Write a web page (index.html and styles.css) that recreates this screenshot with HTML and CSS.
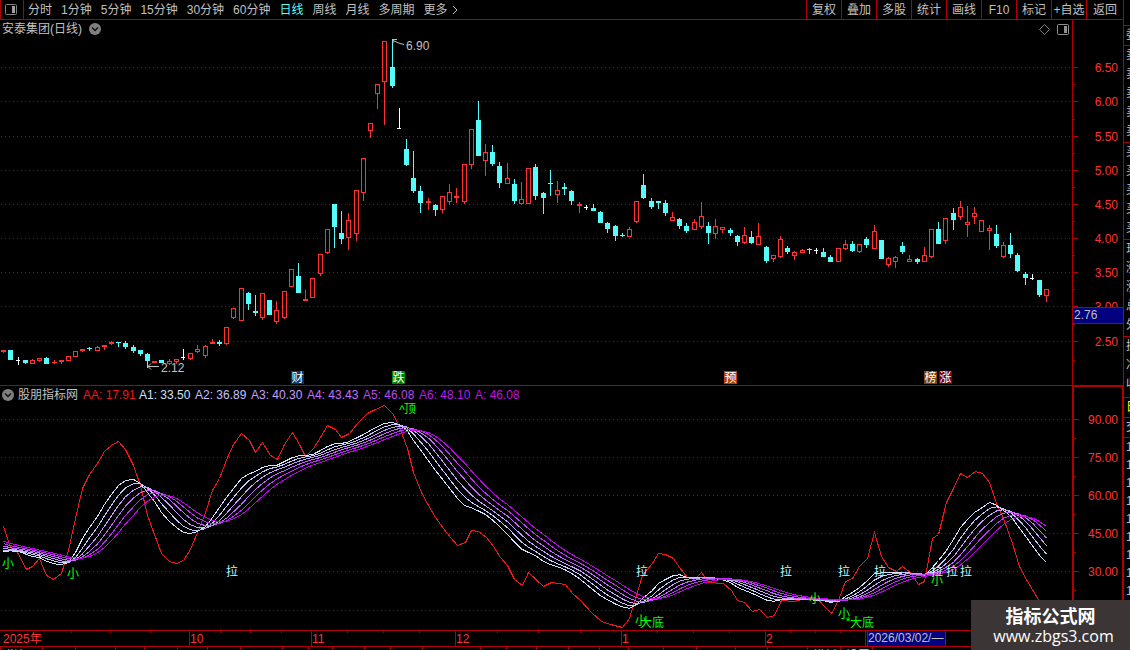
FILE: index.html
```html
<!DOCTYPE html>
<html lang="zh-CN">
<head>
<meta charset="utf-8">
<title>安泰集团(日线)</title>
<link rel="stylesheet" href="styles.css">
</head>
<body>
<div class="app">
  <main class="main">
    <header class="toolbar">
      <button class="layout-btn" aria-label="布局">
        <svg width="14" height="12" viewBox="0 0 14 12"><rect x="1.5" y=".5" width="11" height="10" rx="1" fill="none" stroke="#808080"/><rect x="8" y="2" width="3" height="7" fill="#a0a0a0"/></svg>
      </button>
      <nav class="periods">
        <button>分时</button><button>1分钟</button><button>5分钟</button><button>15分钟</button><button>30分钟</button><button>60分钟</button><button class="active">日线</button><button>周线</button><button>月线</button><button>多周期</button><button class="more">更多<svg width="6" height="10" viewBox="0 0 6 10"><path d="M1 1 L5 5 L1 9" fill="none" stroke="#c0c0c0"/></svg></button>
      </nav>
      <nav class="tools">
        <button>复权</button><button>叠加</button><button>多股</button><button>统计</button><button>画线</button><button>F10</button><button>标记</button><button>+自选</button><button>返回</button>
      </nav>
    </header>

    <section class="panel price">
      <div class="plot">
        <svg class="canvas" id="price-plot"></svg>
        <div class="caption">
          <span>安泰集团(日线)</span>
          <button class="drop" aria-label="展开"><svg width="12" height="12" viewBox="0 0 12 12"><circle cx="6" cy="6" r="6" fill="#808080"/><path d="M3 4.5 L6 7.5 L9 4.5" fill="none" stroke="#101010" stroke-width="1.4"/></svg></button>
        </div>
        <div class="corner">
          <svg width="11" height="11" viewBox="0 0 11 11"><path d="M5.5 .5 L10.500 5.500 L5.500 10.500 L.5 5.500 Z" fill="none" stroke="#808080"/></svg>
          <svg width="12" height="11" viewBox="0 0 12 11"><rect x=".5" y=".5" width="11" height="10" rx="1" fill="none" stroke="#909090"/><rect x="7" y="2" width="3" height="7" fill="#909090"/></svg>
        </div>
      </div>
      <svg class="scale" id="price-scale"></svg>
    </section>

    <section class="panel indicator">
      <div class="plot">
        <svg class="canvas" id="ind-plot"></svg>
        <div class="caption legend">
          <button class="drop" aria-label="展开"><svg width="12" height="12" viewBox="0 0 12 12"><circle cx="6" cy="6" r="6" fill="#808080"/><path d="M3 4.5 L6 7.5 L9 4.5" fill="none" stroke="#101010" stroke-width="1.4"/></svg></button>
          <span class="name">股朋指标网</span>
          <span class="val aa">AA: 17.91</span><span class="val a1">A1: 33.50</span><span class="val a2">A2: 36.89</span><span class="val a3">A3: 40.30</span><span class="val a4">A4: 43.43</span><span class="val a5">A5: 46.08</span><span class="val a6">A6: 48.10</span><span class="val a7">A: 46.08</span>
        </div>
      </div>
      <svg class="scale framed" id="ind-scale"></svg>
    </section>

    <svg class="timeline" id="timeline"></svg>
    <div class="tabs" id="tabs"></div>
  </main>

  <aside class="quote">
    <div class="q-head"></div>
    <div class="q-row line">委</div>
    <div class="q-group"><p>卖</p><p>卖</p><p>卖</p><p>卖</p><p>卖</p></div>
    <div class="q-group"><p>买</p><p>买</p><p>买</p><p>买</p><p>买</p></div>
    <div class="q-group"><p>现</p><p>涨</p><p>涨</p><p>总</p><p>外</p></div>
    <div class="q-group three"><p>换</p><p>净</p><p>收</p></div>
    <div class="q-row line yellow">日</div>
    <div class="q-row line">交</div>
    <div class="q-ticks"><p>1</p><p>1</p><p>1</p><p>1</p><p>1</p><p>1</p><p>1</p><p>1</p><p>1</p></div>
  </aside>

  <div class="watermark">
    <strong>指标公式网</strong>
    <span>www.zbgs3.com</span>
  </div>
</div>
<script src="chart.js"></script>
</body>
</html>
```

FILE: styles.css
```css
* { box-sizing: border-box; }
body {
  margin: 0;
  background: #000;
  color: #c0c0c0;
  font: 12px/18px "Liberation Sans", "Noto Sans CJK SC", sans-serif;
}
button {
  background: none;
  border: 0;
  padding: 0;
  margin: 0;
  color: inherit;
  font: inherit;
  white-space: nowrap;
}
svg { display: block; }
p { margin: 0; }

.app {
  position: relative;
  display: flex;
  height: 100vh;
  overflow: hidden;
}
.main {
  flex: 1;
  min-width: 0;
  display: flex;
  flex-direction: column;
  border-right: 1px solid #b00000;
}

.toolbar {
  display: flex;
  height: 20px;
  flex: none;
  border-bottom: 1px solid #b00000;
}
.layout-btn {
  width: 24px;
  padding-left: 3px;
  border-left: 1px solid #b00000;
  border-right: 1px solid #b00000;
}
.periods {
  display: flex;
  gap: 9px;
  padding-left: 4px;
}
.periods .active { color: #54fcfc; }
.more {
  display: flex;
  align-items: center;
  gap: 4px;
}
.tools {
  display: flex;
  margin-left: auto;
}
.tools button {
  width: 35px;
  border-left: 1px solid #b00000;
}
.tools button:last-child { width: 37px; }

.panel { display: flex; flex: none; }
.price { height: 365px; }
.indicator {
  height: 245px;
  border-top: 1px solid #b00000;
}
.plot {
  position: relative;
  flex: 1;
  min-width: 0;
}
.canvas { width: 100%; height: 100%; }
.scale {
  width: 51px;
  height: 100%;
  border-left: 1px solid #b00000;
}
.scale.framed {
  border-left-width: 2px;
  border-top: 1px solid #b00000;
  border-right: 1px solid #b00000;
}
.caption {
  position: absolute;
  top: 0;
  left: 2px;
  display: flex;
  align-items: center;
  gap: 7px;
}
.legend { gap: 0; }
.legend .name { width: 65px; margin-left: 4px; }
.legend .val { width: 56px; white-space: nowrap; }
.aa { color: #f01818; }
.a1 { color: #d0e0ff; }
.a2 { color: #c4c0ff; }
.a3 { color: #c4a0ff; }
.a4 { color: #c070ff; }
.a5 { color: #b848f0; }
.a6 { color: #b81ce8; }
.a7 { color: #c010e0; }
.corner {
  position: absolute;
  top: 4px;
  right: 3px;
  display: flex;
  gap: 7px;
}

.timeline { width: 100%; height: 16px; flex: none; }
.tabs {
  display: flex;
  flex: none;
  height: 18px;
  border-top: 1px solid #b00000;
}
.tabs span {
  flex: none;
  padding-left: 5px;
  border-left: 1px solid #b00000;
  color: #c0c0c0;
}
.tabs .on { color: #54fcfc; }

.quote {
  width: 6px;
  flex: none;
  overflow: hidden;
  white-space: nowrap;
}
.quote > div {
  padding-left: 2px;
  border-bottom: 1px solid #b00000;
}
.q-head { height: 26px; }
.q-row { height: 20px; }
.q-group { height: 97px; }
.q-group p { height: 19px; }
.q-group.three { height: 61px; }
.yellow { color: #ffff00; }
.q-ticks p { height: 18px; }

.watermark {
  position: absolute;
  right: 0;
  bottom: 0;
  width: 159px;
  height: 50px;
  padding-top: 4px;
  background: #3b3536;
  color: #fff;
  text-align: center;
}
.watermark strong {
  display: block;
  font: bold 18px/22px "Noto Sans CJK SC", sans-serif;
}
.watermark span {
  display: block;
  font: 16px/20px "Open Sans", "Noto Sans", sans-serif;
  padding-left: 6px;
}

svg text { font: 12px "Liberation Sans", "Noto Sans CJK SC", sans-serif; }
.line, .candle { shape-rendering: crispEdges; }
```

FILE: chart.js
```js
const NS = "http://www.w3.org/2000/svg";
const DARK = "#b00000", RED = "#ff3232", CYAN = "#54fcfc", WHITE = "#ffffff", GRAY = "#c0c0c0";

function add(parent, tag, attrs, text) {
  const n = document.createElementNS(NS, tag);
  for (const k in attrs) n.setAttribute(k, attrs[k]);
  if (text !== undefined) n.textContent = text;
  parent.appendChild(n);
  return n;
}
const rect = (p, x, y, width, height, fill) =>
  add(p, "rect", { x, y, width, height, fill, class: "candle" });
const layer = (id, top) =>
  add(document.getElementById(id), "g", { transform: `translate(0 ${-top})` });
const grid = (p, ys) => ys.forEach(y =>
  add(p, "line", { x1: 1, x2: "100%", y1: y + 0.5, y2: y + 0.5, stroke: DARK, "stroke-dasharray": "1 3", class: "line" }));
const slotX = i => Math.round(3.15 + i * 7.193);

/* kind, high, body top, body bottom, low */
const candles = `r 350 350 352 353|c 350 350 360 360|w 357 360 361 365|c 360 360 363 364|r 359 360 364 364|r 358 358 361 362|c 357 358 364 364|r 360 362 363 364|r 360 360 362 364|r 356 356 361 361
r 351 351 357 357|r 349 349 351 352|c 347 348 349 351|r 346 347 351 351|r 345 345 347 350|r 341 342 344 345|c 342 342 343 347|c 341 343 347 349|c 345 347 351 353|c 350 350 354 356
c 353 354 361 368|r 361 361 363 363|c 360 360 363 363|r 359 361 364 365|r 359 359 362 364|w 349 357 358 360|r 353 353 359 360|r 345 349 352 353|r 345 346 356 358|r 339 342 344 344
c 340 342 344 346|r 327 327 344 345|r 308 308 318 319|r 288 288 321 321|c 292 293 304 310|c 295 311 313 316|r 293 293 318 320|c 300 300 315 315|r 301 310 322 324|r 291 291 318 319
r 269 269 287 287|c 263 276 293 293|r 290 299 301 301|r 278 278 298 298|r 254 254 274 276|r 229 229 253 254|c 204 204 227 248|c 211 233 239 244|r 213 220 238 250|r 190 190 234 241
r 158 158 193 201|r 123 123 131 138|r 84 84 94 109|r 41 41 82 125|c 39 67 86 88|w 108 128 129 129|c 139 149 165 166|c 151 178 191 193|c 186 191 203 213|r 198 201 203 210
c 204 205 210 216|r 196 196 210 213|r 184 192 202 205|r 188 196 198 203|r 164 164 202 204|r 129 129 165 169|c 101 120 156 156|r 144 152 161 176|c 145 152 164 166|c 162 166 183 188
r 163 178 184 184|c 179 184 201 204|r 182 199 204 205|r 168 168 204 204|c 164 167 196 200|c 192 193 198 214|c 170 183 184 196|r 181 190 195 203|c 183 187 189 195|c 190 191 201 205
r 202 204 206 213|w 205 207 208 210|c 204 208 211 211|c 211 212 223 223|c 222 223 229 233|c 225 226 236 241|c 233 235 236 237|r 227 229 237 237|r 201 201 222 223|c 174 185 198 199
c 198 201 207 209|c 201 201 203 209|c 200 203 213 216|r 212 217 221 221|c 218 219 226 229|c 223 226 231 233|r 219 222 230 230|r 202 216 227 229|c 222 226 233 244|r 219 226 234 239
r 227 227 230 233|c 228 230 233 236|c 235 236 242 246|r 227 235 243 244|c 231 237 243 244|r 223 236 245 245|c 246 247 261 263|r 255 255 259 262|r 236 239 257 258|c 246 248 252 254
r 251 252 256 260|r 249 250 253 253|c 248 249 250 254|w 248 250 251 254|c 248 252 257 257|c 255 257 262 262|r 248 248 262 262|r 240 244 249 250|c 241 244 251 252|r 244 244 252 253
c 237 239 245 248|r 225 231 249 249|c 240 240 259 259|r 257 258 265 267|r 256 257 262 268|c 242 246 252 254|r 255 259 262 262|c 258 259 262 264|r 247 255 262 262|r 229 229 257 258
c 222 229 244 244|r 218 218 241 244|c 208 213 220 230|r 201 207 217 220|r 206 222 225 237|r 207 213 217 224|r 220 220 232 232|r 225 228 231 250|c 225 234 246 248|r 242 245 257 258
c 233 245 254 258|c 253 255 271 272|c 272 274 278 285|w 274 278 279 280|c 280 280 295 297|r 289 289 296 302`.split(/[|\n]/).map(s => s.trim().split(" "));

const price = layer("price-plot", 20);
grid(price, [67, 101, 136, 170, 204, 238, 272, 306, 341]);
candles.forEach(([kind, ...v], i) => {
  const [hi, top, bot, lo] = v.map(Number);
  const x = slotX(i), color = { r: RED, c: CYAN, w: WHITE }[kind];
  rect(price, x, hi, 1, lo - hi, color);
  rect(price, x - 2, top, kind === "w" ? 4 : 5, bot - top, color);
  if (kind === "r" && bot - top > 2) rect(price, x - 1, top + 1, 3, bot - top - 2, "#000");
});
add(price, "text", { x: 406, y: 50, fill: GRAY }, "6.90");
add(price, "path", { d: "M404 44.500 L400 43.500 L393 40.500 M393 43.500 V39.500 H397", fill: "none", stroke: GRAY });
add(price, "text", { x: 161, y: 372, fill: GRAY }, "2.12");
add(price, "path", { d: "M159 366.500 H148 M151 363.500 L148 366.500 L151 369.500", fill: "none", stroke: GRAY });
[[291, "财", "#003870"], [392, "跌", "#008000"], [724, "预", "#b84000"], [924, "榜", "#804000"], [939, "涨", "#800000"]].forEach(([x, s, c]) => {
  rect(price, x, 371, 13, 13, c);
  add(price, "text", { x: x + 0.5, y: 382, fill: "#fff" }, s);
});

/* A scale has a long tick at each label and a short one half way to the next. */
function scale(id, top, rows, base) {
  const g = layer(id, top);
  rows.forEach(([y, label], i) => {
    rect(g, 0, y, 5, 1, DARK);
    const next = rows[i + 1] ? rows[i + 1][0] : y + 38;
    rect(g, 0, Math.round((y + next) / 2), 2, 1, DARK);
    add(g, "text", { x: base, y: y + 5, fill: RED, "text-anchor": "end" }, label);
  });
  return g;
}
const ps = scale("price-scale", 20, [[67, "6.50"], [101, "6.00"], [136, "5.50"], [170, "5.00"], [204, "4.50"], [238, "4.00"], [272, "3.50"], [306, "3.00"], [341, "2.50"]], 45);
rect(ps, 0, 307, 50, 17, DARK);
rect(ps, 0, 308, 50, 15, "#000080");
add(ps, "text", { x: 1, y: 319, fill: GRAY }, "2.76");
scale("ind-scale", 387, [[419, "90.00"], [457, "75.00"], [495, "60.00"], [533, "45.00"], [571, "30.00"]], 44);

const points = s => s.trim().split(/\s+/).map(p => p.split(",").map(Number));
const aa = points(`3,526 10,547 17,552 26,569 32,566 39,558 46,575 53,579 61,573 68,550 75,518 82,488 89,474 97,463 104,451 111,445 118,441 125,449 133,465 140,485 147,515 154,534 161,553 169,561 176,563 183,560 190,549 197,532 205,512 212,490 219,478 227,457 233,444 241,433 249,440 255,452 262,442 270,455 277,459 284,444 292,432 299,444 305,456 313,448 320,437 327,425 335,429 341,437 349,433 357,423 367,413 375,409 384,405 393,414 399,427 407,448 413,472 421,492 428,505 435,517 443,528 450,537 457,545 465,542 471,530 478,531 486,537 493,546 500,557 507,565 514,579 522,585 528,572 543,586 551,582 565,584 572,593 580,600 591,612 601,621 610,624 622,627 629,618 635,598 642,575 652,563 658,553 665,554 673,558 679,567 687,577 694,579 701,572 708,582 723,583 731,590 737,600 744,602 752,611 759,609 767,617 774,615 781,600 793,601 802,599 817,598 823,605 831,613 838,600 845,581 852,578 859,566 867,558 874,532 881,556 888,567 896,571 902,566 910,572 918,584 924,581 932,538 938,534 946,502 953,488 960,473 967,477 975,471 982,473 989,482 996,503 1003,518 1012,543 1019,566 1027,581 1038,599 1046,612`);
const a1 = points(`-100,515 -47,535 -33,541 -18,547 -4,550 3,551 15,550 32,556 39,557 50,563 61,564 68,562 75,552 82,538 89,527 97,516 104,504 111,494 118,485 125,480 133,479 140,483 147,492 154,501 161,512 169,521 176,527 183,532 190,533 197,531 205,526 212,517 219,507 226,497 233,488 241,478 249,473 255,471 262,467 269,465 277,465 284,461 292,457 299,455 305,455 313,454 320,450 327,446 335,443 343,443 349,441 357,437 365,433 375,427 384,423 392,422 397,423 407,430 413,440 422,452 435,470 447,485 457,498 464,505 473,508 487,515 498,525 508,535 520,548 528,552 537,556 543,561 552,565 560,567 570,572 580,579 591,588 601,596 610,601 620,606 630,608 637,603 643,597 652,590 658,583 665,579 673,575 680,574 687,577 702,577 713,578 727,580 737,587 752,593 767,600 774,601 781,599 802,599 823,600 831,602 838,601 845,596 852,592 859,587 867,580 874,573 888,572 907,572 917,574 924,575 932,567 938,560 946,550 953,539 960,527 967,519 975,511 982,507 989,502 997,505 1003,510 1012,517 1019,528 1027,538 1033,547 1040,556 1046,562`);

function sample(pts, x) {
  let k = 1;
  while (k < pts.length - 1 && pts[k][0] < x) k++;
  const [x0, y0] = pts[k - 1], [x1, y1] = pts[k];
  return y0 + (y1 - y0) * (x - x0) / (x1 - x0);
}
const lead = 14;
let series = [];
for (let i = -lead; i < candles.length; i++) series.push(sample(a1, slotX(i)));
const ind = layer("ind-plot", 386);
grid(ind, [419, 457, 495, 533, 571, 610]);
const draw = (pts, stroke) => add(ind, "polyline", {
  points: pts.map(([x, y]) => `${x + 0.5},${y + 0.5}`).join(" "), fill: "none", stroke, class: "line"
});
draw(aa, "#f01818");
/* Each curve is the exponential average of the one before it. */
["#d0e4ff", "#c8c8ff", "#c8a0ff", "#c468ff", "#c030f8", "#c800f0"].forEach(color => {
  draw(series.slice(lead).map((y, i) => [slotX(i), y]), color);
  let last = series[0];
  series = series.map(y => (last = (y + last) / 2));
});
const mark = (s, x, y, fill) => add(ind, "text", { x, y, fill, "text-anchor": "middle" }, s);
[232, 642, 786, 844, 880, 937, 952, 966].forEach(x => mark("拉", x, 576, "#b8ffff"));
[[8, 568], [73, 578], [641, 625], [815, 603], [844, 618], [937, 585]].forEach(([x, y]) => mark("小", x, y, "#00ff00"));
mark("^", 402, 414, "#00ff00");
mark("顶", 410, 413, "#00ff00");
mark("大底", 652, 627, "#00ff00");
mark("*", 848, 626, "#00ff00");
mark("大底", 862, 627, "#00ff00");

const tl = layer("timeline", 630);
rect(tl, 0, 630, "100%", 1, DARK);
[71, 110, 150, 220, 250, 281, 347, 383, 419, 497, 538, 580, 657, 693, 729, 790, 815, 840].forEach(x => rect(tl, x, 631, 1, 2, DARK));
[[189, "10"], [311, "11"], [455, "12"], [621, "1"], [765, "2"]].forEach(([x, s]) => {
  rect(tl, x, 631, 1, 15, DARK);
  add(tl, "text", { x: x + 1, y: 643, fill: RED }, s);
});
add(tl, "text", { x: 3, y: 643, fill: RED }, "2025年");
rect(tl, 865, 631, 81, 15, DARK);
rect(tl, 866, 631, 1, 15, "#000");
rect(tl, 868, 631, 77, 15, "#000080");
add(tl, "text", { x: 868, y: 642, fill: GRAY }, "2026/03/02/—");

const edges = [0, 42, 75, 115, 144, 177, 207, 240, 282, 308, 332, 364, 390, 422, 480, 506, 536, 568, 599, 628, 663, 696, 735, 767, 807, 840, 872, 971];
const names = { 0: "指标", 24: "模板", 25: "设置" };
edges.slice(0, -1).forEach((x, i) => {
  const tab = document.createElement("span");
  tab.style.width = edges[i + 1] - x + "px";
  tab.textContent = names[i] || "";
  if (i === 25) tab.className = "on";
  document.getElementById("tabs").appendChild(tab);
});
```
